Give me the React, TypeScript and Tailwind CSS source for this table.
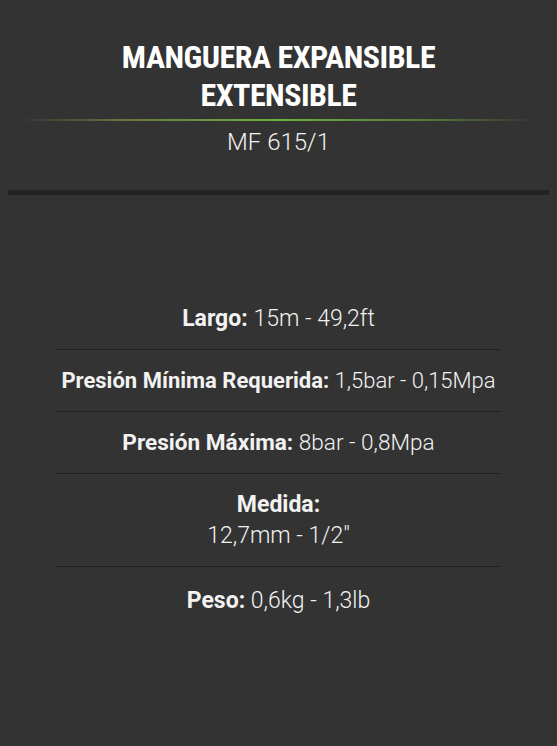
import React from "react";

const rows: { label: string; value: string; stacked?: boolean; size: string }[] = [
  { label: "Largo:", value: "15m - 49,2ft", size: "text-[23px]" },
  { label: "Presión Mínima Requerida:", value: "1,5bar - 0,15Mpa", size: "text-[22px]" },
  { label: "Presión Máxima:", value: "8bar - 0,8Mpa", size: "text-[22.6px]" },
  { label: "Medida:", value: "12,7mm - 1/2\"", stacked: true, size: "text-[23px]" },
  { label: "Peso:", value: "0,6kg - 1,3lb", size: "text-[23px]" },
];

export default function App() {
  return (
    <div
      className="w-[557px] h-[746px] bg-[#333333] text-white overflow-hidden"
      style={{ fontFamily: "Roboto, 'Noto Sans', sans-serif" }}
    >
      <div className="pt-[38px] flex flex-col items-center">
        <h1
          className="text-center text-[32px] leading-[38px] font-bold uppercase tracking-[-0.5px]"
          style={{ fontFamily: "'Roboto Condensed', 'Liberation Sans Narrow', Roboto, sans-serif", fontStretch: "condensed" }}
        >
          Manguera Expansible
          <br />
          Extensible
        </h1>
        <div className="mt-[5px] w-[517px] h-[2px] bg-[linear-gradient(to_right,rgba(160,170,90,0)_0%,rgba(140,160,70,0.6)_20%,#6cb33e_50%,rgba(110,160,60,0.6)_80%,rgba(110,160,60,0)_100%)]" />
        <div className="mt-[6px] text-[24px] leading-[30px] font-light text-[#f2f2f2]">MF 615/1</div>
      </div>
      <div className="mt-[33px] mx-[8px] h-[5px] bg-[#222222]" />
      <div className="mt-[108px] mx-[56px] flex flex-col">
        {rows.map((r, i) => (
          <div
            key={r.label}
            className={`text-center ${r.size} leading-[31px] text-[#f2f2f2] ${
              i < rows.length - 1 ? "border-b border-[#222222]" : ""
            } ${i === 0 ? "pt-0 pb-[15px]" : i === rows.length - 1 ? "pt-[18px]" : "py-[15px]"}`}
          >
            <span className="font-bold">{r.label}</span>
            {r.stacked ? <br /> : " "}
            <span className="font-light">{r.value}</span>
          </div>
        ))}
      </div>
    </div>
  );
}
